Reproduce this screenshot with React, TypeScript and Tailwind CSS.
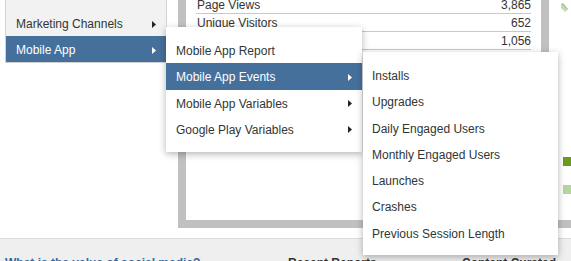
import React from "react";

const font = { fontFamily: '"Liberation Sans", Arial, sans-serif' };

function Arrow({ white }: { white?: boolean }) {
  return (
    <svg width="4" height="7" viewBox="0 0 4 7" className="shrink-0">
      <path d="M0 0L4 3.5L0 7z" fill={white ? "#ffffff" : "#222222"} />
    </svg>
  );
}

function MenuItem({
  label,
  active,
  sub,
  pl = "pl-[10px]",
  h = "h-[26px]",
}: {
  label: string;
  active?: boolean;
  sub?: boolean;
  pl?: string;
  h?: string;
}) {
  return (
    <div
      className={`${h} flex items-center justify-between ${pl} pr-[10px] pt-[2px] text-[12px] ${
        active ? "bg-[#45709c] text-white" : "text-[#2f3636]"
      }`}
    >
      <span>{label}</span>
      {sub && <Arrow white={active} />}
    </div>
  );
}

const rows = [
  { label: "Page Views", value: "3,865" },
  { label: "Unique Visitors", value: "652" },
  { label: "Visits", value: "1,056" },
];

export default function App() {
  return (
    <div className="relative w-[571px] h-[261px] overflow-hidden bg-white" style={font}>
      {/* report panel behind the menus */}
      <div className="flex">
        <div className="w-[178px] shrink-0" />
        <div className="flex-1 h-[228px] border-l-8 border-b-8 border-[#c0c0c0] flex">
          <div className="w-[355px] pl-[10px] pr-[10px]">
            <div className="-mt-1">
              {rows.map((r) => (
                <div
                  key={r.label}
                  className="h-[18px] flex items-center justify-between border-b border-[#c9c9c9] text-[12px] text-[#333]"
                >
                  <span className="pl-[1px]">{r.label}</span>
                  <span>{r.value}</span>
                </div>
              ))}
            </div>
          </div>
          <div className="w-[8px] bg-[#c0c0c0]" />
          <div className="flex-1 flex flex-col">
            <svg width="9" height="11" viewBox="0 0 9 11" className="ml-[11px] mt-[2px]">
              <path d="M1 2L7 8L5 10L1 6z" fill="#c9d8b6" />
              <path d="M1 2L3 1L8 7L7 8z" fill="#a9c48b" />
            </svg>
            <div className="ml-[14px] mt-[144px] w-[8px] h-[9px] bg-[#6b9a22]" />
            <div className="ml-[14px] mt-[19px] w-[8px] h-[9px] bg-[#b7d49d]" />
          </div>
        </div>
      </div>

      {/* footer strip */}
      <div className="mt-[10px] border-t border-[#dcdcdc] bg-[#efefef] h-[40px] pt-[16px] pl-[5px] flex text-[12px] font-bold leading-[16px]">
        <span className="w-[283px] text-[#35689e]">What is the value of social media?</span>
        <span className="w-[174px] text-[#333]">Recent Reports</span>
        <span className="text-[#333]">Content Curated</span>
      </div>

      {/* first level menu */}
      <div className="absolute left-[5px] top-[-17px] w-[162px] bg-[#f2f2f2] border border-[#d2d2d2]">
        <div className="h-[26px] flex items-start justify-between pl-[10px] pr-[10px] text-[12px] text-[#2f3636]">
          <span>Campaigns</span>
          <span className="pt-[9px]">
            <Arrow />
          </span>
        </div>
        <MenuItem label="Marketing Channels" sub />
        <MenuItem label="Mobile App" active sub />
      </div>

      {/* second level menu */}
      <div className="absolute left-[166px] top-[27px] w-[196px] bg-white py-[10px] shadow-[0_2px_7px_rgba(0,0,0,0.3)]">
        <MenuItem h="h-[26.25px]" label="Mobile App Report" />
        <MenuItem h="h-[26.25px]" label="Mobile App Events" active sub />
        <MenuItem h="h-[26.25px]" label="Mobile App Variables" sub />
        <MenuItem h="h-[26.25px]" label="Google Play Variables" sub />
      </div>

      {/* third level menu */}
      <div className="absolute left-[363px] top-[52px] w-[195px] bg-white pt-[10px] pb-[9px] shadow-[0_2px_7px_rgba(0,0,0,0.3)]">
        {[
          "Installs",
          "Upgrades",
          "Daily Engaged Users",
          "Monthly Engaged Users",
          "Launches",
          "Crashes",
          "Previous Session Length",
        ].map((l) => (
          <MenuItem key={l} h="h-[26.25px]" label={l} pl="pl-[9px]" />
        ))}
      </div>
    </div>
  );
}
